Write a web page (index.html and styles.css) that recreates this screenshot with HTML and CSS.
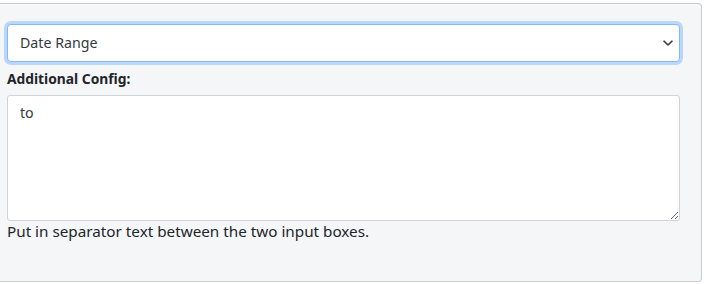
FILE: index.html
```html
<!DOCTYPE html>
<html lang="en">
<head>
<meta charset="utf-8">
<title>Config</title>
<link rel="stylesheet" href="styles.css">
</head>
<body>
<div class="panel">
  <div class="select-wrap">
    <div class="select">Date Range</div>
    <svg class="chevron" width="10" height="7" viewBox="0 0 10 7"><path d="M1 1.2 L5 5 L9 1.2" fill="none" stroke="#3b4045" stroke-width="1.6" stroke-linecap="round" stroke-linejoin="round"/></svg>
  </div>
  <label class="label" for="cfg">Additional Config:</label>
  <textarea id="cfg" class="textarea">to</textarea>
  <div class="help">Put in separator text between the two input boxes.</div>
</div>
</body>
</html>
```
FILE: styles.css
```css
html, body {
  margin: 0;
  padding: 0;
  background: #ffffff;
}
body {
  font-family: "Noto Sans", "Liberation Sans", sans-serif;
  color: #212529;
}
.panel {
  box-sizing: border-box;
  width: 702px;
  height: 279px;
  margin-top: 3px;
  background: #f5f6f8;
  border-top: 1px solid #c9ccd1;
  border-right: 1px solid #c9ccd1;
  border-bottom: 1px solid #c9ccd1;
  border-radius: 0 4px 4px 0;
  padding: 20px 21px 0 7px;
  display: flex;
  flex-direction: column;
}
.select-wrap {
  position: relative;
  margin-bottom: 6px;
}
.select {
  box-sizing: border-box;
  height: 38px;
  background: #fff;
  border: 1px solid #86b7fe;
  border-radius: 4px;
  box-shadow: 0 0 0 3px #b9d6fc;
  padding: 0 12px;
  font-size: 14.2px;
  line-height: 36px;
  color: #343a40;
}
.chevron {
  position: absolute;
  right: 7px;
  top: 16px;
}
.label {
  display: block;
  font-size: 13.8px;
  font-weight: 700;
  line-height: 21px;
  margin-bottom: 6px;
  color: #212529;
}
.textarea {
  box-sizing: border-box;
  display: block;
  width: 100%;
  height: 126px;
  margin: 0;
  background: #fff;
  border: 1px solid #ced4da;
  border-radius: 3px;
  padding: 6px 12px;
  font-family: inherit;
  font-size: 14.2px;
  line-height: 22.5px;
  color: #343a40;
  resize: vertical;
  outline: none;
}
.help {
  font-size: 15.25px;
  line-height: 21px;
  color: #212529;
}
```
